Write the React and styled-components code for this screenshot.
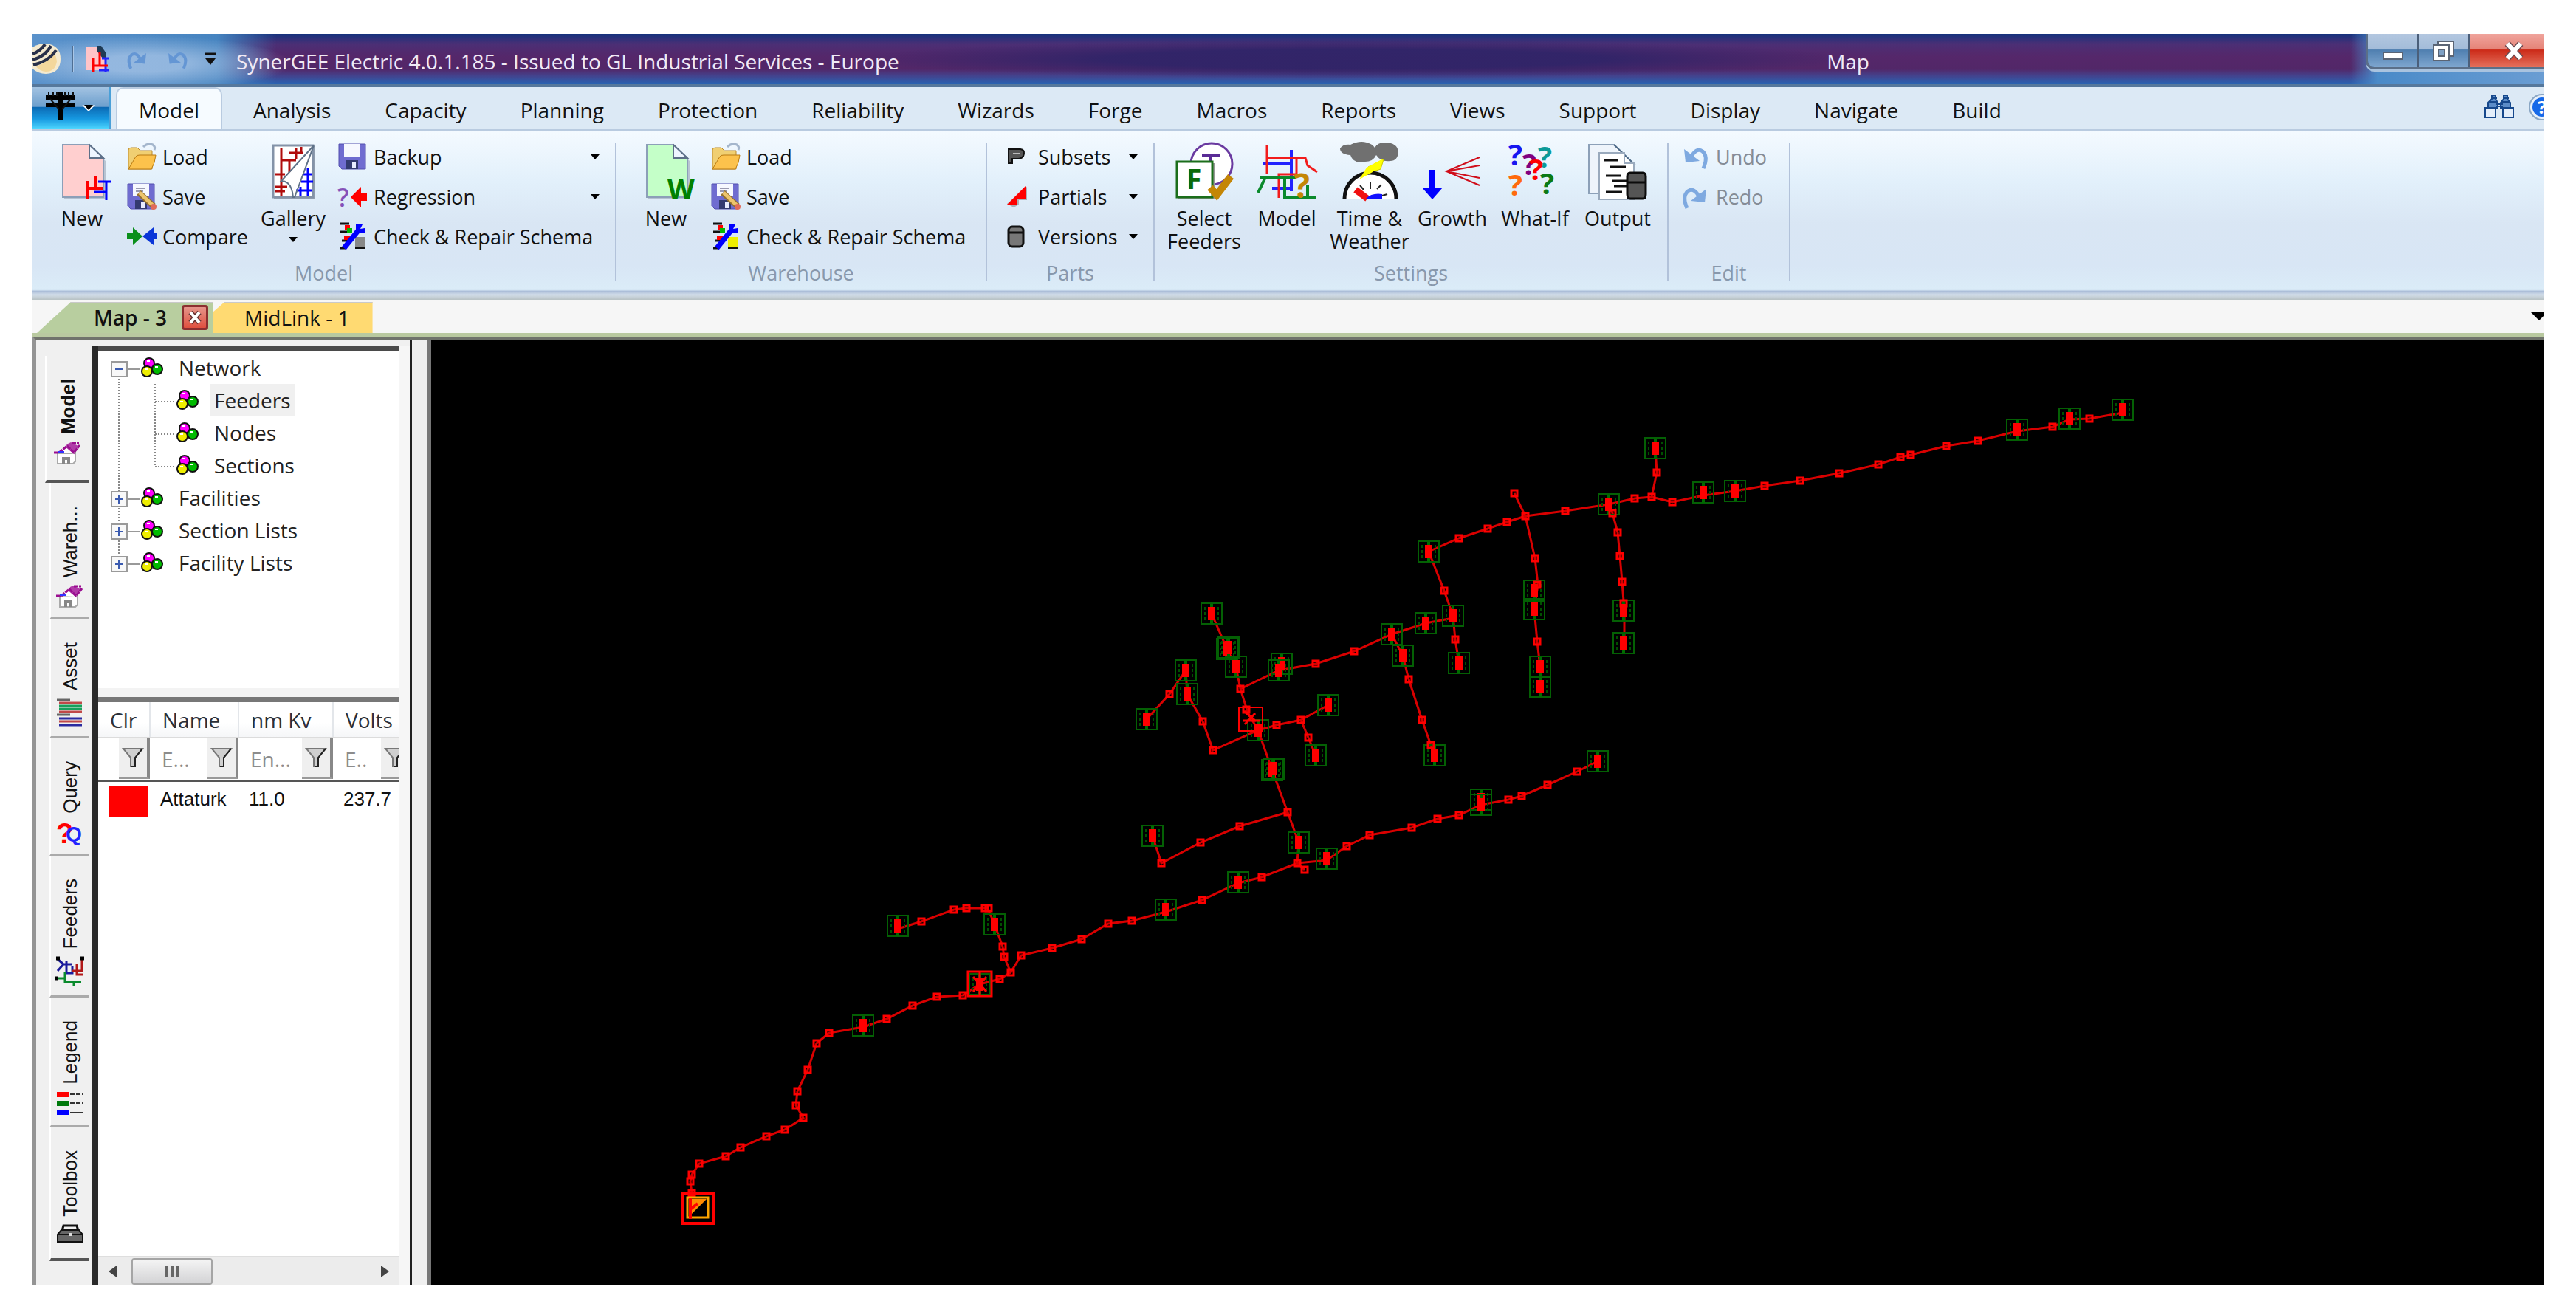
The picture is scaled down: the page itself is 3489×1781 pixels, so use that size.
import React from 'react'
import styled, { createGlobalStyle } from 'styled-components'

const GlobalStyle = createGlobalStyle`
    *{
        box-sizing: border-box;
    }

    body{
        margin: 0;
        background-color: #fff;
        font-family: "Open Sans", "Noto Sans", sans-serif;
        font-size: 27px;
        color: #111;
    }

    button{
        font: inherit;
        color: inherit;
        border: 0;
        padding: 0;
        background: none;
    }

    svg{
        display: block;
        flex: none;
        overflow: visible;
    }
`

const Page = styled.div`
    min-height: 100vh;
    padding: 46px 44px 40px;
    display: flex;
    flex-direction: column;
`

const Window = styled.main`
    flex: 1;
    display: flex;
    flex-direction: column;
    overflow: hidden;
    background-color: #f6f6f6;
`

/* ---------- title bar ---------- */

const TitleBar = styled.header`
    height: 72px;
    display: flex;
    align-items: center;
    border-bottom: 4px solid #56789c;
    background:
        radial-gradient(ellipse 200px 38px at 150px 40px, rgba(176,202,234,.7) 30%, rgba(176,202,234,0)),
        linear-gradient(90deg, #5a92cb 0, #4684c0 250px, rgba(70,132,192,0) 330px),
        linear-gradient(270deg, #6a9dd3 0, #4a8ac8 225px, rgba(70,132,192,0) 262px),
        radial-gradient(ellipse 680px 26px at 1790px 34px, rgba(44,36,104,.85) 50%, rgba(44,36,104,0)),
        linear-gradient(180deg, #15327d 0, #4b2f75 20%, #55276a 45%, #522768 70%, #45408a 82%, #2a63b2 100%);
`

const QuickBar = styled.div`
    display: flex;
    align-items: center;
    height: 56px;

    button{
        margin-right: 22px;
    }
`

const Divider = styled.span`
    width: 2px;
    height: 36px;
    background-color: #4f6f94;
    border-right: 1px solid #a9c6e6;
    margin: 0 16px;
`

const Title = styled.h1`
    margin: 0 0 0 6px;
    padding-top: 6px;
    font-size: 28px;
    line-height: 36px;
    font-weight: 400;
    color: #f1eaf6;
    white-space: nowrap;
`

const ContextTitle = styled(Title).attrs({ as: 'span' })`
    margin-left: auto;
    margin-right: 672px;
`

const WindowButtons = styled.div`
    align-self: flex-start;
    display: flex;
    height: 48px;
    border: solid #5b6f88;
    border-width: 0 0 3px 3px;
    border-radius: 0 0 0 12px;
    overflow: hidden;
    box-shadow: 0 3px 0 #a9c3df;
`

const WindowButton = styled.button`
    width: ${props => props.$close ? '100px' : '69px'};
    padding-left: ${props => props.$close ? '20px' : '0'};
    display: flex;
    align-items: center;
    justify-content: center;
    border-right: ${props => props.$close ? '0' : '2px solid #4b5f7a'};
    background: ${props => props.$close
        ? 'linear-gradient(180deg, #f0a49c 0, #e58478 45%, #cc2a18 48%, #e4705c 100%)'
        : 'linear-gradient(180deg, #b3c7e0 0, #a3bcd9 45%, #4f7fb0 48%, #7ea6cf 100%)'};
`

/* ---------- ribbon tabs ---------- */

const TabBar = styled.nav`
    height: 59px;
    display: flex;
    gap: 15px;
    font-size: 28px;
    background-color: #dce9f5;
    border-bottom: 2px solid #b9cbe0;
    overflow: hidden;
`

const AppButton = styled.button`
    width: 106px;
    margin-right: -6px;
    padding-left: 17px;
    display: flex;
    gap: 10px;
    align-items: flex-start;
    padding-top: 6px;
    border-right: 2px solid #4aa0d8;
    background: linear-gradient(180deg, #a3c3e2 0, #6d9fcd 46%, #0c6ab4 48%, #1698e0 75%, #4fd8ff 100%);
`

const Tab = styled.button`
    height: 57px;
    margin-top: 2px;
    padding: 0 29px;
    line-height: 34px;
    white-space: nowrap;
    border-radius: 8px 8px 0 0;
    background-color: ${props => props.$active ? '#f6fbff' : 'transparent'};
    box-shadow: ${props => props.$active ? '0 0 0 2px #b9cbe0' : 'none'};
`

const TabTools = styled.div`
    margin-left: auto;
    width: 80px;
    display: flex;
    gap: 20px;
    padding-top: 9px;
`

/* ---------- ribbon ---------- */

const Ribbon = styled.section`
    height: 229px;
    display: flex;
    padding-bottom: 12px;
    background: linear-gradient(180deg, #f4faff 0, #e2f0fb 30%, #d9e6f4 55%, #d8e6f5 80%, #dbecf8 94%, #abbdd8 95%, #d2dde9 97%, #b8c2c4 100%);
`

const Group = styled.section`
    margin: 16px 0 13px;
    padding: 0 11px;
    border-right: 2px solid #b2c2da;
    display: flex;
    flex-direction: column;
    justify-content: space-between;
`

const GroupBody = styled.div`
    display: flex;
    margin-top: -8px;
`

const GroupLabel = styled.h2`
    margin: 0;
    font-size: 27px;
    line-height: 22px;
    font-weight: 400;
    text-align: center;
    color: #8898ac;
`

const BigButton = styled.button`
    width: 112px;
    height: 162px;
    padding-top: 8px;
    display: flex;
    flex-direction: column;
    align-items: center;
    line-height: 31px;
    white-space: pre-line;

    svg{
        margin-bottom: 9px;
    }
`

const Column = styled.div`
    width: ${props => props.$width};
    padding: 0 10px 0 ${props => props.$indent || '5px'};
`

const SmallButton = styled.button`
    width: 100%;
    height: 54px;
    display: flex;
    align-items: center;
    gap: 8px;
    color: ${props => props.disabled ? '#858c96' : '#111'};
    white-space: nowrap;
`

const Arrow = styled.i`
    width: 0;
    height: 0;
    margin: ${props => props.$below ? '10px 0 0' : '0 0 0 auto'};
    border: 6px solid transparent;
    border-top: 7px solid #000;
    border-bottom: 0;
`

/* ---------- document tabs ---------- */

const DocTabs = styled.nav`
    height: 50px;
    padding: 3px 0 0 6px;
    display: flex;
    align-items: stretch;
    font-size: 28px;
    border-bottom: 5px solid #b9c9a0;
`

const DocTab = styled.div`
    display: flex;
    align-items: center;
    gap: 20px;
    padding: ${props => props.$active ? '0 6px 2px 77px' : '0 31px 2px 43px'};
    font-weight: ${props => props.$active ? 600 : 400};
    background-color: ${props => props.$active ? '#b8ce9f' : '#ffda72'};
    border-top: 2px solid #c9c9c9;
    white-space: nowrap;
    clip-path: ${props => props.$active
        ? 'polygon(46px 0, 100% 0, 100% 100%, 0 100%)'
        : 'polygon(16px 0, 100% 0, 100% 100%, 0 100%, 0 14px)'};
`

const CloseTab = styled.button`
    width: 36px;
    height: 34px;
    display: grid;
    place-items: center;
    border: 3px solid #8c2f30;
    border-radius: 4px;
    background: linear-gradient(180deg, #e5958a, #e0503f);
`

const DocMenu = styled.button`
    margin: 13px -6px 0 auto;
    align-self: flex-start;

    i{
        display: block;
        border: 12px solid transparent;
        border-top-color: #000;
        border-bottom: 0;
    }
`

/* ---------- body ---------- */

const Body = styled.div`
    flex: 1;
    display: flex;
    border-top: 5px solid #70736c;
    border-left: 5px solid #949494;
    background-color: #f0f0f0;
`

const SideTabs = styled.nav`
    width: 76px;
    padding: 21px 4px 0 12px;
    display: flex;
    flex-direction: column;
`

const SideTab = styled.button`
    display: flex;
    flex-direction: column;
    align-items: center;
    gap: 10px;
    padding: 31px 0 ${props => props.$last || props.$active ? '20px' : '12px'};
    margin-left: ${props => props.$active ? '0' : '6px'};
    border-bottom: ${props => props.$last || props.$active ? '4px solid #555' : '3px solid #aaa'};
    border-left: 2px solid #fff;
    font-family: "Liberation Sans", Arial, sans-serif;
    font-size: 26px;
    font-weight: ${props => props.$active ? 700 : 400};

    span{
        writing-mode: vertical-rl;
        transform: rotate(180deg);
        line-height: 34px;
    }
`

const Panel = styled.aside`
    width: 430px;
    margin-top: 8px;
    border-left: 8px solid #2a2a2a;
    border-right: 14px solid #f6f6f6;
    display: flex;
    flex-direction: column;
    background-color: #fff;
`

const Splitter = styled.div`
    width: 29px;
    border-left: 3px solid #222;
    border-right: 6px solid #777;
    background-color: #efefef;
`

const Tree = styled.ul`
    height: 476px;
    margin: 0;
    padding: 0 0 0 17px;
    list-style: none;
    border-top: 7px solid #4a4a4a;
    font-size: 28px;
    line-height: 44px;
    color: #222;
`

const TreeRow = styled.li`
    height: 44px;
    display: flex;
    align-items: center;
`

const TreeLabel = styled.span`
    margin-left: 15px;
    padding: 0 5px;
    background-color: ${props => props.$selected ? '#f0f0f0' : 'transparent'};
`

const GridArea = styled.div`
    flex: 1;
    border-top: 7px solid #777;
    margin-top: -1px;
    box-shadow: 0 -12px 0 #f3f3f3;
    overflow: hidden;
`

const Grid = styled.table`
    width: 425px;
    table-layout: fixed;
    border-collapse: collapse;
    font-size: 28px;

    th{
        height: 48px;
        padding: 0 0 0 16px;
        text-align: left;
        font-weight: 400;
        white-space: nowrap;
        color: #2b2f38;
        border-right: 2px solid #e3e6ea;
        border-bottom: 2px solid #dcdcdc;
        background: linear-gradient(180deg, #fff 60%, #f5f6f8);
    }

    tbody td{
        height: 52px;
        padding: 0 0 4px 14px;
        font-family: "Liberation Sans", Arial, sans-serif;
        font-size: 26px;
        white-space: nowrap;
    }

    tbody td:first-child{
        padding: 6px 2px 4px 15px;
    }
`

const FilterCell = styled.td`
    padding: 0;
    height: 58px;
    border-bottom: 3px solid #555;

    div{
        display: flex;
        justify-content: flex-end;
        overflow: hidden;
    }
`

const FilterInput = styled.input`
    flex: 1;
    min-width: 0;
    padding: 0 0 0 16px;
    border: 0;
    background: none;
    font: inherit;

    &::placeholder{
        color: #8c8c8c;
        opacity: 1;
    }
`

const FilterButton = styled.button`
    flex: none;
    width: 42px;
    height: 55px;
    display: grid;
    place-items: center;
    background-color: #efefef;
    border-right: 4px solid #888;
    border-bottom: 3px solid #999;
`

const Swatch = styled.div`
    height: 42px;
    background-color: #f00;
`

const ScrollBar = styled.div`
    height: 40px;
    padding: 0 14px;
    display: flex;
    align-items: center;
    background-color: #ececec;
    border-top: 2px solid #dedede;

    button:last-child{
        margin-left: auto;
    }
`

const Thumb = styled.div`
    width: 110px;
    height: 36px;
    margin-left: 20px;
    display: flex;
    align-items: center;
    justify-content: center;
    gap: 4px;
    border: 2px solid #a5a5a5;
    border-radius: 4px;
    background: linear-gradient(180deg, #f4f4f4, #d3d3d5);

    i{
        width: 4px;
        height: 16px;
        background-color: #666;
    }
`

const MapArea = styled.section`
    flex: 1;
    min-width: 0;
    background-color: #000;

    svg{
        width: 100%;
    }
`

/* ---------- icons ---------- */

const Big = ({ children }) => <svg width="84" height="78" viewBox="0 0 84 78" fill="none">{children}</svg>
const Small = ({ children }) => <svg width="40" height="38" viewBox="0 0 40 38" fill="none">{children}</svg>

const PageShape = ({ fill }) => (
    <>
        <path d="M18 5h36l20 20v52H18z" fill="#9aa5b5" opacity=".6" />
        <path d="M16 3h36l19 18v53H16z" fill={fill} stroke="#8c9fb8" strokeWidth="2" />
        <path d="M52 3v18h19z" fill="#eef5ff" stroke="#5d6f88" strokeWidth="2" />
    </>
)

const NewShape = () => (
    <>
        <PageShape fill="#ffcfcf" />
        <path d="M50 52v25M50 62h20M60 45v17" stroke="#f00" strokeWidth="4" />
        <path d="M64 53h18M75 53v25M58 67h17" stroke="#00f" strokeWidth="3" />
    </>
)

const NewModelIcon = () => <Big><NewShape /></Big>

const QuickNewIcon = () => (
    <svg width="32" height="38" viewBox="0 0 32 38" fill="none">
        <path d="M1 2h18l7 8v24H1z" fill="#ffc4c8" />
        <path d="M16 1h5l6 9v8h-4l-7-9z" fill="#1f3a54" />
        <path d="M22 18h9M27 18v18M18 34h13" stroke="#22f" strokeWidth="3" />
        <path d="M10 18v19M19 9v20M10 28h20" stroke="#f00" strokeWidth="3" />
    </svg>
)

const NewWarehouseIcon = () => (
    <Big>
        <PageShape fill="#c4ffc8" />
        <text x="44" y="77" fontSize="38" fontWeight="700" fill="#008000">W</text>
    </Big>
)

const GalleryIcon = () => (
    <Big>
        <rect x="16" y="5" width="56" height="72" fill="#9aa5b5" />
        <rect x="15" y="4" width="54" height="70" fill="#fff" stroke="#8493a8" strokeWidth="3" />
        <path d="M26 7v66M26 24h20M37 24v16M37 14h18M46 8v14M53 6v10M18 43h13M18 60h16M17 66h14" stroke="#b00c0c" strokeWidth="3" />
        <path d="M62 34v39M56 43h12M53 53h16M46 65h22M52 60v12" stroke="#00f" strokeWidth="3" />
        <path d="M70 4L26 52q14 0 16 22h2L70 4" stroke="#5f7288" strokeWidth="2" />
    </Big>
)

const SelectFeedersIcon = () => (
    <Big>
        <circle cx="52" cy="29" r="28" fill="#fff" stroke="#6a3aa0" strokeWidth="3" />
        <path d="M39 17h25M51 17v22" stroke="#5a2c96" strokeWidth="4" />
        <rect x="7" y="28" width="49" height="48" fill="#999" />
        <rect x="5" y="26" width="48" height="48" fill="#fff" stroke="#1b6e1b" strokeWidth="3" />
        <text x="18" y="63" fontSize="37" fontWeight="700" fill="#0a6a0a">F</text>
        <path d="M50 61l9 10 19-25" stroke="#c48606" strokeWidth="10" />
    </Big>
)

const SettingsModelIcon = () => (
    <Big>
        <path d="M48 10v56M9 28h41M22 62h25" stroke="#22f" strokeWidth="4" />
        <path d="M15 4v38M15 21h52l3 10 13 9M55 21v22H31v32" stroke="#f21c1c" strokeWidth="3" />
        <path d="M6 47h48M13 47L3 68M39 48v26h43M70 58v17" stroke="#0a8a2c" strokeWidth="4" />
        <text x="51" y="75" fontSize="46" fontWeight="700" fill="#c48606">?</text>
    </Big>
)

const WeatherIcon = () => (
    <Big>
        <path d="M2 8q4-6 14-5 12-6 22-3 8 2 11 7 4-7 13-7 18 0 19 13-1 12-11 12-12 2-19-8-5 10-17 9-14 3-18-9Q2 16 2 8z" fill="#707070" />
        <path d="M61 23L40 33l2 5-9 3-5 9 22-11-2 0 9-3z" fill="#ff0" stroke="#cc0" strokeWidth="1" />
        <path d="M8 76a35 35 0 0 1 70 0" fill="#fff" stroke="#111" strokeWidth="5" />
        <path d="M43 53v10M29 58l5 6M58 57l-6 6M66 70l-7 2" stroke="#222" strokeWidth="2" />
        <path d="M23 64l16 12" stroke="#f01010" strokeWidth="9" />
        <path d="M37 76q8-8 22-6v6z" fill="#11f" />
        <path d="M60 22L38 34l-10 16 18-10 4-5 6-1z" fill="#ff0" />
    </Big>
)

const GrowthIcon = () => (
    <Big>
        <path d="M10 37h9v24h10L15 77 1 61h9z" fill="#00f" />
        <path d="M79 20L34 39 79 58M79 31L34 39l45 9" stroke="#d00d1a" strokeWidth="2" />
    </Big>
)

const WhatIfIcon = () => (
    <Big>
        <g fontSize="40" fontWeight="700">
            <text x="6" y="31" fill="#1616f0">?</text>
            <text x="46" y="34" fill="#0b9a98">?</text>
            <text x="25" y="44" fill="#800080">?</text>
            <text x="34" y="51" fill="#f00">?</text>
            <text x="6" y="72" fill="#ff6a0d">?</text>
            <text x="49" y="70" fill="#0a7a16">?</text>
        </g>
    </Big>
)

const OutputIcon = () => (
    <Big>
        <path d="M3 3h34l27 26v40H3z" fill="#eef4fb" stroke="#8ca0b8" strokeWidth="2" />
        <path d="M37 3l27 26H52" fill="#fff" stroke="#4e6a88" strokeWidth="2" />
        <path d="M17 14h34v14h13v49H17z" fill="#fff" stroke="#9aaabd" strokeWidth="2" />
        <path d="M23 24h20M31 33h22M26 45h20M34 52h22M37 59h20M26 67h22" stroke="#111" strokeWidth="3" />
        <path d="M55 46q0-5 4-5h17q4 0 4 5v24q0 6-4 6H59q-4 0-4-6z" fill="#555" stroke="#0c0c0c" strokeWidth="3" />
        <path d="M56 54h24" stroke="#0c0c0c" strokeWidth="3" />
    </Big>
)

const FolderIcon = () => (
    <Small>
        <path d="M22 6q6-6 13-3 4 3 2 7" stroke="#a4b6cc" strokeWidth="3" />
        <path d="M2 10q0-3 4-3h8l4 4h16v25H2z" fill="#f0cf72" stroke="#bc8a2c" strokeWidth="1" />
        <path d="M2 36l10-17q1-2 5-2h22q-1 11-6 19z" fill="#fcc24c" stroke="#b97b12" strokeWidth="1" />
    </Small>
)

const FloppyShape = () => (
    <>
        <path d="M1 2h36v34H5l-4-4z" fill="#6f6cd0" stroke="#524fae" strokeWidth="1" />
        <rect x="8" y="2" width="22" height="17" fill="#f6f8ff" />
        <rect x="11" y="24" width="16" height="12" fill="#333a70" />
        <rect x="19" y="27" width="5" height="8" fill="#e8ecff" />
    </>
)

const FloppyIcon = () => <Small><FloppyShape /></Small>

const SaveIcon = () => (
    <Small>
        <FloppyShape />
        <path d="M12 8h12M12 12h10" stroke="#9a9ab0" strokeWidth="2" />
        <path d="M16 14l20 18" stroke="#94702e" strokeWidth="8" />
        <path d="M17 14l18 17" stroke="#edc46c" strokeWidth="5" />
        <circle cx="36" cy="33" r="4" fill="#e06a5a" />
    </Small>
)

const CompareIcon = () => (
    <Small>
        <path d="M0 15h8V7l13 12L8 31v-8H0z" fill="#0a8f1c" />
        <path d="M40 15h-4V7L21 19l15 12v-8h4z" fill="#0a36d8" />
    </Small>
)

const RegressionIcon = () => (
    <Small>
        <text x="-1" y="33" fontSize="34" fontWeight="600" fill="#8450b8">?</text>
        <path d="M17 20L31 6v9h8v10h-8v9z" fill="#f00" />
    </Small>
)

const CheckIcon = ({ base = '#888' }) => (
    <Small>
        <path d="M3 2h12M3 13h12M5 25h8M3 35h8" stroke="#111" strokeWidth="3" />
        <rect x="9" y="4" width="7" height="6" fill="#f00" />
        <rect x="12" y="8" width="7" height="6" fill="#0b0" />
        <rect x="8" y="18" width="8" height="6" fill="#f00" />
        <rect x="23" y="20" width="14" height="14" fill={base} />
        <path d="M23 35h14" stroke="#111" strokeWidth="2" />
        <path d="M8 35L29 9" stroke="#00f" strokeWidth="7" />
        <path d="M24 12V3h9l-3 6 6-1v7h-9z" fill="#00f" />
    </Small>
)

const SubsetsIcon = () => (
    <Small>
        <path d="M8 28V9h16q6 1 5 6-1 7-8 7h-8v6z" fill="#555" stroke="#111" strokeWidth="2" />
        <path d="M14 15h9" stroke="#bbb" strokeWidth="2" />
    </Small>
)

const PartialsIcon = () => (
    <Small>
        <path d="M33 6v18H22v6l-7 4-9-5z" fill="#777" opacity=".5" />
        <path d="M31 5v17H20v9H5z" fill="#f00" />
    </Small>
)

const VersionsIcon = () => (
    <Small>
        <rect x="8" y="6" width="20" height="27" rx="5" fill="#777" stroke="#111" strokeWidth="3" />
        <path d="M8 14h20" stroke="#111" strokeWidth="3" />
    </Small>
)

const CurveShape = ({ color = '#7ea9e0' }) => (
    <>
        <path d="M31 35q7-16-1-23-9-6-16 9" stroke={color} strokeWidth="5" />
        <path d="M5 9l2 18 19-2z" fill={color} />
    </>
)

const UndoIcon = () => <Small><CurveShape /></Small>
const RedoIcon = () => <Small><g transform="matrix(-1 0 0 1 40 0)"><CurveShape /></g></Small>

const QuickCurve = ({ flip }) => (
    <svg width="32" height="32" viewBox="0 0 40 38" fill="none">
        <g transform={flip ? 'matrix(-1 0 0 1 40 0)' : undefined}><CurveShape color="#6496d4" /></g>
    </svg>
)

const LogoIcon = () => (
    <svg width="38" height="42" viewBox="0 0 38 42" fill="none">
        <path d="M0 5Q8 0 18 0q20 2 20 21T18 41Q8 41 0 34z" fill="#f4ead0" />
        <path d="M4 30q14 0 22-20 6 4 7 14-2 14-15 14-9-1-14-8z" fill="#f2cf86" opacity=".7" />
        <path d="M0 14Q10 11 17 1M0 22Q18 17 25 3M1 29Q22 24 32 9" stroke="#28304a" strokeWidth="4" />
    </svg>
)

const PoleIcon = () => (
    <svg width="42" height="40" viewBox="0 0 42 40" fill="none">
        <path d="M21 1v38" stroke="#000" strokeWidth="6" />
        <path d="M1 8h40M1 18h40" stroke="#000" strokeWidth="6" />
        <path d="M5 1v5M11 1v5M16 1v5M27 1v5M32 1v5M38 1v5M7 10l12 14M35 10L23 24" stroke="#111" strokeWidth="2" />
    </svg>
)

const BinocularsIcon = () => (
    <svg width="40" height="34" viewBox="0 0 40 34" fill="none" stroke="#16488c" strokeWidth="2">
        <path d="M10 7V2h5v5l3 5v7H5v-7zM26 7V2h5v5l4 5v7H22v-7z" fill="#5b8cc8" />
        <path d="M1 19h14v13H1zM25 19h14v13H25z" fill="#e4eefa" />
        <path d="M7 11h12M22 11h13M16 14h9M16 17h9M9 6h8M25 6h8" />
    </svg>
)

const HelpIcon = () => (
    <svg width="36" height="36" viewBox="0 0 36 36">
        <circle cx="18" cy="18" r="17" fill="#e8f0fa" stroke="#8aa6c4" strokeWidth="2" />
        <circle cx="18" cy="18" r="13" fill="#1668e8" />
        <text x="12" y="27" fontSize="24" fontWeight="700" fill="#fff">?</text>
    </svg>
)

const ClusterIcon = () => (
    <svg width="32" height="28" viewBox="0 0 32 28" stroke="#111" strokeWidth="2">
        <circle cx="12" cy="8" r="7" fill="#f0f" />
        <circle cx="23" cy="16" r="7" fill="#0b0" />
        <circle cx="9" cy="19" r="7" fill="#ee0" />
        <path d="M9 5h4M6 16h4M20 13h4" stroke="#fff" />
    </svg>
)

const FunnelIcon = () => (
    <svg width="28" height="26" viewBox="0 0 28 26">
        <path d="M1 1h26L17 13v12h-6V13z" fill="#d0d0d0" stroke="#777" strokeWidth="2" />
        <path d="M27 1L17 13v12h-5" fill="none" stroke="#222" strokeWidth="2" />
    </svg>
)

const HouseIcon = () => (
    <svg width="38" height="32" viewBox="0 0 38 32" fill="none">
        <path d="M19 3l4-2 10 5-4 9-7 3-8-3z" fill="#b03aa8" />
        <path d="M5 16h20l4-4v15l-3 3H5z" fill="#fff" stroke="#aaa" strokeWidth="2" />
        <path d="M4 15l11-8 11 9" fill="#fff" />
        <path d="M13 30v-7h7v7" stroke="#888" strokeWidth="4" />
        <path d="M0 15h7L18 6l9 9 8-10M24 2h10" stroke="#9a0d90" strokeWidth="3" strokeDasharray="6 1" />
        <path d="M5 14h9" stroke="#33f" strokeWidth="2" />
    </svg>
)

const AssetIcon = () => (
    <svg width="38" height="40" viewBox="0 0 38 40" fill="none" strokeWidth="3">
        <path d="M4 7h31M4 19h31M4 32h31" stroke="#c04848" />
        <path d="M4 11h31M4 15h31" stroke="#18a05c" />
        <path d="M4 28h31M4 37h31" stroke="#2a2aa0" />
        <path d="M1 3h18M1 23h18" stroke="#666" />
    </svg>
)

const QueryIcon = () => (
    <svg width="38" height="32" viewBox="0 0 38 32" fontWeight="700">
        <text x="0" y="30" fontSize="38" fill="#f00">?</text>
        <text x="13" y="27" fontSize="28" fill="#22f">Q</text>
    </svg>
)

const FeedersIcon = () => (
    <svg width="42" height="40" viewBox="0 0 42 40" fill="none" strokeWidth="3">
        <path d="M4 3l8 7-8 9M12 10h12M16 6v16h8v-9" stroke="#1a1a9c" />
        <path d="M37 3v16H24M30 10v14h9" stroke="#b21818" />
        <path d="M2 29h12v-8M14 29v5h22M26 34v5" stroke="#0a8a2c" />
        <path d="M2 2h5M35 2h5M0 29h5" stroke="#000" strokeWidth="5" />
    </svg>
)

const LegendIcon = () => (
    <svg width="38" height="34" viewBox="0 0 38 34">
        <rect x="1" y="1" width="16" height="7" fill="#f00" />
        <rect x="1" y="13" width="16" height="7" fill="#007a0c" />
        <rect x="1" y="25" width="16" height="7" fill="#00f" />
        <path d="M19 4h18M19 16h18" stroke="#333" strokeWidth="2" strokeDasharray="6 2" />
        <path d="M19 29h18" stroke="#333" strokeWidth="2" />
    </svg>
)

const ToolboxIcon = () => (
    <svg width="38" height="26" viewBox="0 0 38 26">
        <path d="M8 9l2-7h18l2 7" fill="none" stroke="#111" strokeWidth="3" />
        <path d="M2 14l5-6h24l5 6v10H2z" fill="#666" stroke="#111" strokeWidth="2" />
        <path d="M3 14h32" stroke="#111" strokeWidth="2" />
        <rect x="17" y="12" width="4" height="4" fill="#ddd" />
    </svg>
)

/* ---------- tree ---------- */

const Expander = ({ open, first, last }) => (
    <svg width="40" height="44" viewBox="0 0 40 44" fill="none">
        <path d={`M11 ${first ? 33 : 0}V${last ? 12 : 44}`} stroke="#888" strokeWidth="2" strokeDasharray="2 2" />
        <path d="M24 24h16" stroke="#999" strokeWidth="2" />
        <rect x="1" y="14" width="21" height="20" fill="#f8f8f8" stroke="#9a9a9a" strokeWidth="2" />
        <path d={open ? 'M6 24h11' : 'M6 24h11M11 18v12'} stroke="#3b5bb0" strokeWidth="2" />
    </svg>
)

const Branch = ({ last }) => (
    <svg width="88" height="44" viewBox="0 0 88 44" fill="none" stroke="#888" strokeWidth="2" strokeDasharray="2 2">
        <path d="M11 0v44" />
        <path d={`M60 0V${last ? 24 : 44}M60 24h28`} />
    </svg>
)

/* ---------- network map ---------- */

// each feeder run is a list of points in map units
const runs = [
    '937,1616 935,1600 937,1591 947,1576 983,1566 1003,1554 1038,1539 1063,1530 1088,1514 1078,1497 1080,1478 1094,1449 1106,1413 1123,1399 1169,1391 1201,1380 1236,1362 1269,1350 1304,1348 1327,1333 1354,1326 1369,1317 1383,1294 1425,1284 1465,1272 1501,1251 1533,1247 1579,1235 1628,1219 1677,1196 1709,1188 1757,1169 1797,1165 1824,1146 1855,1131 1912,1121 1947,1109 1976,1104 2006,1090 2043,1083 2061,1078 2096,1063 2136,1045 2164,1031',
    '1216,1258 1248,1248 1292,1232 1309,1230 1338,1230 1347,1252 1358,1282 1360,1296 1369,1317',
    '1641,831 1662,879 1674,903 1680,933 1690,965 1704,989 1723,1043 1744,1100 1759,1141 1757,1169 1767,1178',
    '1561,1132 1573,1169 1626,1141 1679,1119 1744,1100',
    '1553,974 1584,940 1606,908 1608,940 1629,977 1643,1016 1704,989 1729,982 1762,975 1799,955',
    '1762,975 1772,999 1782,1023',
    '1680,933 1732,908 1782,899 1834,882 1885,859 1931,844 1968,837',
    '1885,859 1900,888 1908,920 1926,975 1938,1009 1943,1023',
    '1976,898 1971,866 1968,834 1956,800 1935,747 1976,729 2015,716 2041,707 2066,699 2120,692 2179,683 2214,675 2237,673 2265,680 2307,671 2350,665 2390,658 2438,651 2491,641 2544,629 2574,619 2588,616 2636,604 2679,597 2732,584 2780,578 2803,568 2830,567 2875,559',
    '2051,668 2066,699 2079,756 2083,792 2078,825 2082,869 2086,903 2086,930',
    '2179,683 2184,695 2191,721 2194,753 2197,788 2200,827 2200,871',
    '2237,673 2244,640 2242,607',
]

const joints = '937,1616 935,1600 937,1591 947,1576 983,1566 1003,1554 1038,1539 1063,1530 1088,1514 1078,1497 1080,1478 1094,1449 1106,1413 1123,1399 1201,1380 1236,1362 1269,1350 1304,1348 1354,1326 1369,1317 1383,1294 1425,1284 1465,1272 1501,1251 1533,1247 1628,1219 1709,1188 1757,1169 1767,1178 1824,1146 1855,1131 1912,1121 1947,1109 1976,1104 2043,1083 2061,1078 2096,1063 2136,1045 1248,1248 1292,1232 1309,1230 1334,1230 1339,1230 1358,1282 1360,1296 1680,933 1744,1100 1573,1169 1626,1141 1679,1119 1584,940 1629,977 1643,1016 1729,982 1762,975 1772,999 1782,899 1834,882 1908,920 1926,975 1938,1009 1971,866 1956,800 1976,729 2015,716 2041,707 2066,699 2051,668 2120,692 2079,756 2082,792 2082,869 2184,695 2191,721 2194,753 2197,788 2199,817 2214,675 2237,673 2244,640 2265,680 2390,658 2438,651 2491,641 2544,629 2574,619 2588,616 2636,604 2679,597 2780,578 2830,567 1688,961'

const loads = '1641,831 1662,879 1664,877 1674,903 1606,908 1608,940 1553,974 1736,899 1732,908 1885,859 1931,844 1968,834 1900,888 1976,898 1935,747 2078,800 2078,825 2086,903 2086,930 2179,683 2199,827 2199,871 2242,607 1799,955 1782,1023 1943,1023 1704,989 1723,1043 1725,1041 2164,1031 2006,1083 2006,1090 1759,1141 1797,1163 1561,1132 1677,1195 2307,667 2350,665 2732,582 2803,567 2875,555 1216,1254 1347,1252 1579,1232 1169,1389 1327,1333'

const points = list => list.split(' ').map(pair => pair.split(',').map(Number))

const NetworkMap = () => (
    <svg viewBox="584 461 2861 1280" fill="none" role="img" aria-label="Network map">
        <g stroke="#d80000" strokeWidth="3">
            {runs.map(run => <polyline key={run} points={run} />)}
        </g>
        {points(loads).map(([x, y]) => (
            <g key={`${x}-${y}`} transform={`translate(${x} ${y})`}>
                <rect x="-14" y="-14" width="28" height="28" stroke="#046004" strokeWidth="2" />
                <path d="M0-13v27" stroke="#006c00" strokeWidth="4" />
                <path d="M-9-9v18M9-9v18" stroke="#005000" strokeWidth="2" strokeDasharray="4 3" />
                <rect x="-5" y="-9" width="10" height="18" fill="#f00" />
            </g>
        ))}
        <g stroke="#f00" strokeWidth="3">
            {points(joints).map(([x, y]) => (
                <rect key={`${x}-${y}`} x={x - 4} y={y - 4} width="8" height="8" />
            ))}
            <rect x="1678" y="958" width="32" height="32" strokeWidth="2" />
            <path d="M1685 963l16 14M1700 966l-14 15M1683 976h24" />
            <rect x="1311" y="1316" width="32" height="33" />
            <path d="M1327 1317v32M1318 1323l18 20M1336 1323l-18 20" />
        </g>
        <rect x="924" y="1616" width="42" height="41" stroke="#f00" strokeWidth="4" />
        <rect x="931" y="1622" width="28" height="27" stroke="#ffa500" strokeWidth="3" />
        <path d="M933 1624h24l-22 22z" fill="#ff8a00" />
        <path d="M935 1622v29M935 1638l10-8" stroke="#f00" strokeWidth="4" />
    </svg>
)

/* ---------- data ---------- */

const tabs = ['Model', 'Analysis', 'Capacity', 'Planning', 'Protection', 'Reliability', 'Wizards', 'Forge', 'Macros', 'Reports', 'Views', 'Support', 'Display', 'Navigate', 'Build']

const settings = [
    ['Select\nFeeders', SelectFeedersIcon],
    ['Model', SettingsModelIcon],
    ['Time &\nWeather', WeatherIcon],
    ['Growth', GrowthIcon],
    ['What-If', WhatIfIcon],
    ['Output', OutputIcon],
]

const sideTabs = [
    ['Model', HouseIcon],
    ['Wareh...', HouseIcon],
    ['Asset', AssetIcon],
    ['Query', QueryIcon],
    ['Feeders', FeedersIcon],
    ['Legend', LegendIcon],
    ['Toolbox', ToolboxIcon],
]

const Item = ({ icon, children, menu, disabled }) => (
    <SmallButton disabled={disabled}>
        {icon}
        {children}
        {menu && <Arrow />}
    </SmallButton>
)

const App = () => {
  return (
    <Page>
        <GlobalStyle />
        <Window>
            <TitleBar>
                <QuickBar>
                    <LogoIcon />
                    <Divider />
                    <button aria-label="New model"><QuickNewIcon /></button>
                    <button aria-label="Redo"><QuickCurve flip /></button>
                    <button aria-label="Undo"><QuickCurve /></button>
                    <button aria-label="Customize toolbar">
                        <svg width="14" height="18" viewBox="0 0 14 18">
                            <path d="M0 2h14" stroke="#111" strokeWidth="3" />
                            <path d="M0 8h14l-7 9z" fill="#111" />
                        </svg>
                    </button>
                </QuickBar>
                <Title>SynerGEE Electric 4.0.1.185 - Issued to GL Industrial Services - Europe</Title>
                <ContextTitle>Map</ContextTitle>
                <WindowButtons>
                    <WindowButton aria-label="Minimize">
                        <svg width="30" height="36" viewBox="0 0 30 36">
                            <rect x="2" y="20" width="26" height="9" fill="#fff" stroke="#5a6474" strokeWidth="2" />
                        </svg>
                    </WindowButton>
                    <WindowButton aria-label="Restore">
                        <svg width="32" height="32" viewBox="0 0 32 32" fill="none">
                            <path d="M8 3h21v20H8z" fill="#fff" stroke="#5a6474" strokeWidth="2" />
                            <path d="M2 8h21v21H2z" fill="#fff" stroke="#5a6474" strokeWidth="2" />
                            <path d="M9 14h8v9H9z" fill="#7ea0c4" stroke="#5a6474" strokeWidth="2" />
                        </svg>
                    </WindowButton>
                    <WindowButton $close aria-label="Close">
                        <svg width="28" height="28" viewBox="0 0 28 28" fill="none">
                            <path d="M5 4l18 20M23 4L5 24" stroke="#6a4a50" strokeWidth="9" />
                            <path d="M5 4l18 20M23 4L5 24" stroke="#fff" strokeWidth="6" />
                        </svg>
                    </WindowButton>
                </WindowButtons>
            </TitleBar>

            <TabBar>
                <AppButton aria-label="Application menu">
                    <PoleIcon />
                    <svg width="14" height="28" viewBox="0 0 14 28">
                        <path d="M2 20h10l-5 5z" stroke="#fff" strokeWidth="3" />
                        <path d="M1 18h12l-6 7z" />
                    </svg>
                </AppButton>
                {tabs.map((tab, i) => <Tab key={tab} $active={i === 0}>{tab}</Tab>)}
                <TabTools>
                    <BinocularsIcon />
                    <HelpIcon />
                </TabTools>
            </TabBar>

            <Ribbon>
                <Group>
                    <GroupBody>
                        <BigButton><NewModelIcon />New</BigButton>
                        <Column $width="174px">
                            <Item icon={<FolderIcon />}>Load</Item>
                            <Item icon={<SaveIcon />}>Save</Item>
                            <Item icon={<CompareIcon />}>Compare</Item>
                        </Column>
                        <BigButton><GalleryIcon />Gallery<Arrow $below /></BigButton>
                        <Column $width="369px">
                            <Item icon={<FloppyIcon />} menu>Backup</Item>
                            <Item icon={<RegressionIcon />} menu>Regression</Item>
                            <Item icon={<CheckIcon />}>Check & Repair Schema</Item>
                        </Column>
                    </GroupBody>
                    <GroupLabel>Model</GroupLabel>
                </Group>
                <Group>
                    <GroupBody>
                        <BigButton><NewWarehouseIcon />New</BigButton>
                        <Column $width="366px">
                            <Item icon={<FolderIcon />}>Load</Item>
                            <Item icon={<SaveIcon />}>Save</Item>
                            <Item icon={<CheckIcon base="#ee0" />}>Check & Repair Schema</Item>
                        </Column>
                    </GroupBody>
                    <GroupLabel>Warehouse</GroupLabel>
                </Group>
                <Group>
                    <GroupBody>
                        <Column $width="203px" $indent="10px">
                            <Item icon={<SubsetsIcon />} menu>Subsets</Item>
                            <Item icon={<PartialsIcon />} menu>Partials</Item>
                            <Item icon={<VersionsIcon />} menu>Versions</Item>
                        </Column>
                    </GroupBody>
                    <GroupLabel>Parts</GroupLabel>
                </Group>
                <Group>
                    <GroupBody>
                        {settings.map(([label, Icon]) => <BigButton key={label}><Icon />{label}</BigButton>)}
                    </GroupBody>
                    <GroupLabel>Settings</GroupLabel>
                </Group>
                <Group>
                    <GroupBody>
                        <Column $width="141px">
                            <Item icon={<UndoIcon />} disabled>Undo</Item>
                            <Item icon={<RedoIcon />} disabled>Redo</Item>
                        </Column>
                    </GroupBody>
                    <GroupLabel>Edit</GroupLabel>
                </Group>
            </Ribbon>

            <DocTabs>
                <DocTab $active>
                    Map - 3
                    <CloseTab aria-label="Close Map - 3">
                        <svg width="18" height="18" viewBox="0 0 18 18" fill="none">
                            <path d="M3 2l12 14M15 2L3 16" stroke="#633" strokeWidth="7" />
                            <path d="M3 2l12 14M15 2L3 16" stroke="#fff" strokeWidth="4" />
                        </svg>
                    </CloseTab>
                </DocTab>
                <DocTab>MidLink - 1</DocTab>
                <DocMenu aria-label="Open documents"><i /></DocMenu>
            </DocTabs>

            <Body>
                <SideTabs>
                    {sideTabs.map(([label, Icon], i) => (
                        <SideTab key={label} $active={i === 0} $last={i === sideTabs.length - 1}>
                            <span>{label}</span>
                            <Icon />
                        </SideTab>
                    ))}
                </SideTabs>
                <Panel>
                    <Tree>
                        <TreeRow><Expander open first /><ClusterIcon /><TreeLabel>Network</TreeLabel></TreeRow>
                        <TreeRow><Branch /><ClusterIcon /><TreeLabel $selected>Feeders</TreeLabel></TreeRow>
                        <TreeRow><Branch /><ClusterIcon /><TreeLabel>Nodes</TreeLabel></TreeRow>
                        <TreeRow><Branch last /><ClusterIcon /><TreeLabel>Sections</TreeLabel></TreeRow>
                        <TreeRow><Expander /><ClusterIcon /><TreeLabel>Facilities</TreeLabel></TreeRow>
                        <TreeRow><Expander /><ClusterIcon /><TreeLabel>Section Lists</TreeLabel></TreeRow>
                        <TreeRow><Expander last /><ClusterIcon /><TreeLabel>Facility Lists</TreeLabel></TreeRow>
                    </Tree>
                    <GridArea>
                        <Grid>
                            <colgroup>
                                <col width="70" />
                                <col width="120" />
                                <col width="128" />
                                <col width="107" />
                            </colgroup>
                            <thead>
                                <tr><th>Clr</th><th>Name</th><th>nm Kv</th><th>Volts</th></tr>
                                <tr>
                                    {['', 'E...', 'En...', 'E..'].map((hint, i) => (
                                        <FilterCell key={i}>
                                            <div>
                                                {hint && <FilterInput placeholder={hint} aria-label={`Filter column ${i + 1}`} />}
                                                <FilterButton aria-label="Filter"><FunnelIcon /></FilterButton>
                                            </div>
                                        </FilterCell>
                                    ))}
                                </tr>
                            </thead>
                            <tbody>
                                <tr><td><Swatch /></td><td>Attaturk</td><td>11.0</td><td>237.7</td></tr>
                            </tbody>
                        </Grid>
                    </GridArea>
                    <ScrollBar>
                        <button aria-label="Scroll left"><svg width="11" height="16" viewBox="0 0 11 16"><path d="M11 0v16L0 8z" fill="#444" /></svg></button>
                        <Thumb><i /><i /><i /></Thumb>
                        <button aria-label="Scroll right"><svg width="11" height="16" viewBox="0 0 11 16"><path d="M0 0v16l11-8z" fill="#444" /></svg></button>
                    </ScrollBar>
                </Panel>
                <Splitter />
                <MapArea>
                    <NetworkMap />
                </MapArea>
            </Body>
        </Window>
    </Page>
  )
}

export default App
